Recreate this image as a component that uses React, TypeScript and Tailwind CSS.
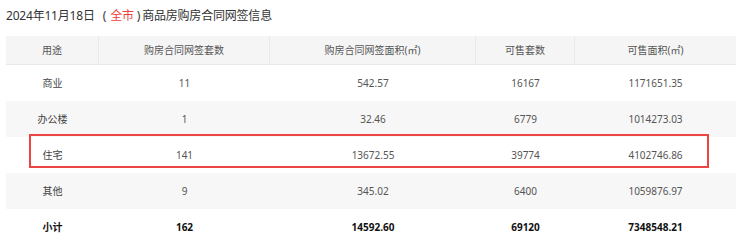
import type { JSX } from 'react';

interface SignRow {
  use: string;
  contracts: string;
  area: string;
  forSale: string;
  saleArea: string;
}

const rows: SignRow[] = [
  { use: '商业', contracts: '11', area: '542.57', forSale: '16167', saleArea: '1171651.35' },
  { use: '办公楼', contracts: '1', area: '32.46', forSale: '6779', saleArea: '1014273.03' },
  { use: '住宅', contracts: '141', area: '13672.55', forSale: '39774', saleArea: '4102746.86' },
  { use: '其他', contracts: '9', area: '345.02', forSale: '6400', saleArea: '1059876.97' },
];

const total: SignRow = {
  use: '小计',
  contracts: '162',
  area: '14592.60',
  forSale: '69120',
  saleArea: '7348548.21',
};

const headers = ['用途', '购房合同网签套数', '购房合同网签面积(㎡)', '可售套数', '可售面积(㎡)'];

const cols = 'grid grid-cols-[93px_171px_206px_99px_161px]';

export default function App(): JSX.Element {
  return (
    <div
      className="w-[740px] h-[247px] bg-white text-[#555]"
      style={{ fontFamily: '"Noto Sans", "Noto Sans CJK SC", sans-serif' }}
    >
      <div className="flex h-[36px] items-center pb-[4px] pl-[6px] text-[12px] tracking-[-0.2px] text-[#333]">
        <span>2024年11月18日</span>
        <span className="ml-[8px]">(</span>
        <span className="ml-[4px] text-[#f23c3c]">全市</span>
        <span className="ml-[3px]">)</span>
        <span className="ml-[2px]">商品房购房合同网签信息</span>
      </div>

      <div className="relative ml-[6px] w-[730px] text-[10px]">
        <div className={`${cols} h-[29px] border-b border-[#e9e9e9] bg-[#f5f5f5] text-[#555]`}>
          {headers.map((h, i) => (
            <div
              key={h}
              className={
                'flex items-center justify-center ' +
                (i < headers.length - 1 ? 'border-r border-[#e9e9e9]' : '')
              }
            >
              {h}
            </div>
          ))}
        </div>

        {rows.map((row, i) => (
          <div
            key={row.use}
            className={`${cols} h-[36px] items-center text-center ${
              i % 2 === 1 ? 'bg-[#f7f7f7]' : 'bg-white'
            }`}
          >
            <div className="text-[#444]">{row.use}</div>
            <div>{row.contracts}</div>
            <div>{row.area}</div>
            <div>{row.forSale}</div>
            <div>{row.saleArea}</div>
          </div>
        ))}

        <div className={`${cols} h-[36px] items-center text-center font-bold text-[#111]`}>
          <div>{total.use}</div>
          <div>{total.contracts}</div>
          <div>{total.area}</div>
          <div>{total.forSale}</div>
          <div>{total.saleArea}</div>
        </div>

        {/* highlight over the 住宅 row */}
        <div className="pointer-events-none absolute left-[23px] top-[98px] h-[34px] w-[680px] border-2 border-[#ef4444]" />
      </div>
    </div>
  );
}
